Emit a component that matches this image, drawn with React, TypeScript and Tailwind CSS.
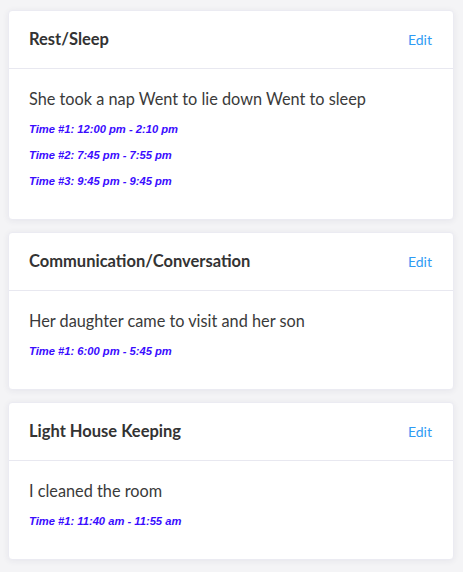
import React from "react";

type Entry = { title: string; text: string; times: string[] };

const entries: Entry[] = [
  {
    title: "Rest/Sleep",
    text: "She took a nap Went to lie down Went to sleep",
    times: ["Time #1: 12:00 pm - 2:10 pm", "Time #2: 7:45 pm - 7:55 pm", "Time #3: 9:45 pm - 9:45 pm"],
  },
  {
    title: "Communication/Conversation",
    text: "Her daughter came to visit and her son",
    times: ["Time #1: 6:00 pm - 5:45 pm"],
  },
  {
    title: "Light House Keeping",
    text: "I cleaned the room",
    times: ["Time #1: 11:40 am - 11:55 am"],
  },
];

export default function App() {
  return (
    <div
      className="min-h-[572px] w-[463px] bg-[#f4f4f6] pl-2 pr-[9px] pt-[10px] flex flex-col gap-[12px]"
      style={{ fontFamily: "Lato, 'Noto Sans', sans-serif" }}
    >
      {entries.map((e) => (
        <div
          key={e.title}
          className="bg-white rounded-[4px] border border-[#ebebf2] shadow-[0_1px_6px_rgba(40,40,80,0.07)]"
        >
          <div className="h-[58px] border-b border-[#e8e8f0] flex items-center justify-between pl-5 pr-[21px]">
            <span className="text-[16.5px] font-bold text-[#333333]">{e.title}</span>
            <span className="text-[14px] text-[#2f9bf4]">Edit</span>
          </div>
          <div className="pl-5 pr-5 pt-[18px] pb-[30px]">
            <div className="text-[16.3px] leading-[24px] text-[#3a3a3a]">{e.text}</div>
            <div className="mt-[10px] flex flex-col gap-[10px]">
              {e.times.map((t) => (
                <div
                  key={t}
                  className="text-[11.2px] leading-[16px] font-bold italic text-[#3a0cff]"
                  style={{ fontFamily: "'Liberation Sans', Arial, sans-serif" }}
                >
                  {t}
                </div>
              ))}
            </div>
          </div>
        </div>
      ))}
    </div>
  );
}
